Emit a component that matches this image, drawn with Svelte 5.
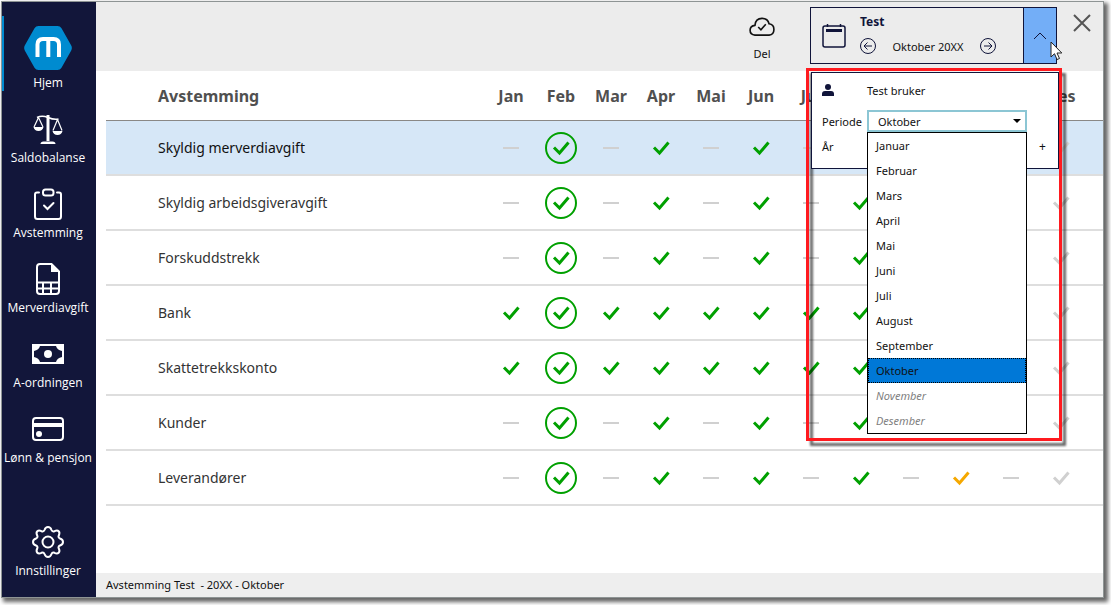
<script lang="ts">
  type Status = "none" | "done" | "final" | "pending" | "empty";

  interface Account {
    name: string;
    months: Status[];
  }

  const months = [
    "Januar", "Februar", "Mars", "April", "Mai", "Juni",
    "Juli", "August", "September", "Oktober", "November", "Desember",
  ];

  const menu = [
    { id: "home", label: "Hjem" },
    { id: "balance", label: "Saldobalanse" },
    { id: "reconcile", label: "Avstemming" },
    { id: "vat", label: "Merverdiavgift" },
    { id: "salary-report", label: "A-ordningen" },
    { id: "payroll", label: "Lønn & pensjon" },
  ];

  // One letter per month: - none, d done, f final, p pending, e empty
  const codes: Record<string, Status> = { "-": "none", d: "done", f: "final", p: "pending", e: "empty" };

  function account(name: string, row: string): Account {
    return { name, months: [...row].map(c => codes[c]) };
  }

  const accounts = [
    account("Skyldig merverdiavgift", "-f-d-d-d-p-e"),
    account("Skyldig arbeidsgiveravgift", "-f-d-d-d-p-e"),
    account("Forskuddstrekk", "-f-d-d-d-p-e"),
    account("Bank", "dfdddddddpee"),
    account("Skattetrekkskonto", "dfdddddddpee"),
    account("Kunder", "-f-d-d-d-p-e"),
    account("Leverandører", "-f-d-d-d-p-e"),
  ];

  const client = "Test";
  const year = "20XX";
  const lastOpenMonth = 9;

  let activeMenu = $state("home");
  let selectedRow = $state(0);
  let month = $state(9);
  let open = $state(true);

  function step(delta: number) {
    month = Math.min(lastOpenMonth, Math.max(0, month + delta));
  }
</script>

{#snippet menuIcon(id: string)}
  {#if id === "home"}
    <svg width="48" height="44" viewBox="0 0 48 44">
      <path d="M14.500 0h19q2.600 0 4 2.300l9.600 17q1.500 2.700 0 5.400l-9.600 17q-1.400 2.300-4 2.300h-19q-2.600 0-4-2.300l-9.600-17q-1.500-2.700 0-5.400l9.600-17q1.400-2.300 4-2.300z" fill="#008bd0" />
      <path d="M13.500 31V18.500q0-5.500 5.500-5.500h10.500q5.500 0 5.500 5.500V31M24.300 13v18" fill="none" stroke="#fff" stroke-width="4" />
    </svg>
  {:else if id === "balance"}
    <svg width="32" height="32" viewBox="0 0 32 32" fill="none" stroke="#fff">
      <path d="M16 2v26" stroke-width="3" />
      <path d="M5 4.500q5-2.500 11 0t10.500 1.500" stroke-width="1.500" />
      <path d="M6.500 4.500 2 14M6.500 4.500 11 14M25.500 6.500 21 17.500M25.500 6.500 30 17.500" stroke-width="1.200" />
      <path d="M1.500 14h10q-1 4-5 4t-5-4zM20.500 18h10q-1 4-5 4t-5-4z" fill="#fff" stroke="none" />
      <path d="M8.500 31q0-2.500 3-2.500h9q3 0 3 2.500z" fill="#fff" stroke="none" />
    </svg>
  {:else if id === "reconcile"}
    <svg width="32" height="32" viewBox="0 0 32 32" fill="none" stroke="#fff" stroke-width="2" stroke-linecap="round">
      <path d="M7 4.500H5Q3 4.500 3 6.500v22q0 2.500 2.500 2.500h21q2.500 0 2.500-2.500v-22q0-2-2-2h-2" />
      <rect x="11" y="1.500" width="10.500" height="6" rx="2.500" />
      <path d="M12 17.500l3.500 3.500 6-6" />
    </svg>
  {:else if id === "vat"}
    <svg width="32" height="32" viewBox="0 0 32 32" fill="none" stroke="#fff" stroke-width="2">
      <path d="M19.500 1H8Q5 1 5 4v24q0 3 3 3h16q3 0 3-3V8.500z" />
      <path d="M19 1v8h8z" fill="#fff" stroke="none" />
      <path d="M5 19.500h22M5 25.500h22M11 19.500V31M19 19.500V31" />
    </svg>
  {:else if id === "salary-report"}
    <svg width="32" height="32" viewBox="0 0 32 32">
      <rect x="1" y="7" width="30" height="18" fill="none" stroke="#fff" stroke-width="2" />
      <path d="M2 8h6q-1 4-6 5zM30 8h-6q1 4 6 5zM2 24h6q-1-4-6-5zM30 24h-6q1-4 6-5z" fill="#fff" />
      <circle cx="16" cy="16" r="4" fill="#fff" />
    </svg>
  {:else if id === "payroll"}
    <svg width="32" height="32" viewBox="0 0 32 32">
      <rect x="1" y="5" width="30" height="22" rx="3" fill="none" stroke="#fff" stroke-width="2" />
      <path d="M1 10h30v4H1z" fill="#fff" />
      <circle cx="7" cy="21" r="3" fill="#fff" />
    </svg>
  {:else}
    <svg width="32" height="32" viewBox="0 0 32 32" fill="none" stroke="#fff" stroke-width="2" stroke-linejoin="round">
      <path d="M12.500 4q1-3 3.500-3t3.500 3q.8 2 3 1.200 2.800-1.400 4.200.1t.1 4.200q-1 2 1.200 3 3 1 3 3.500t-3 3.500q-2.200 1-1.200 3 1.400 2.800-.1 4.200t-4.200.1q-2.200-.8-3 1.200-1 3-3.500 3t-3.500-3q-.8-2-3-1.200-2.800 1.400-4.200-.1t-.1-4.200q1-2-1.200-3-3-1-3-3.500t3-3.500q2.200-1 1.200-3-1.400-2.800.1-4.200t4.200-.1q2.200.8 3-1.200z" />
      <circle cx="16" cy="16" r="5.500" />
    </svg>
  {/if}
{/snippet}

{#snippet statusMark(status: Status)}
  <svg class="mark {status}" width="32" height="32" viewBox="0 0 32 32" aria-label={status}>
    {#if status === "none"}
      <path d="M8 16h16" />
    {:else}
      {#if status === "final"}
        <circle cx="16" cy="16" r="15" />
      {/if}
      <path class="tick" d="M9 15.500l5.500 5.500 9-10.500" />
    {/if}
  </svg>
{/snippet}

<div class="window">
  <nav class="sidebar">
    {#each menu as item (item.id)}
      <button class="menu-item" class:active={activeMenu === item.id} onclick={() => (activeMenu = item.id)}>
        {@render menuIcon(item.id)}
        <span>{item.label}</span>
      </button>
    {/each}
    <button class="menu-item settings">
      {@render menuIcon("settings")}
      <span>Innstillinger</span>
    </button>
  </nav>

  <div class="content">
    <header class="topbar">
      <button class="share">
        <svg width="26" height="20" viewBox="0 0 24 18" fill="none" stroke="#111" stroke-width="1.500">
          <path d="M5.500 16.500Q1 16 1 12t4.500-4.500Q6 1 12 1q5.500 0 6.500 5 4.500.5 4.500 5.200T18.500 16.500z" />
          <path d="M8.500 9l2.500 2.500 4.500-5" />
        </svg>
        <span>Del</span>
      </button>

      <div class="picker">
        <svg class="calendar" width="24" height="24" viewBox="0 0 24 24" fill="none" stroke="#10143a">
          <rect x="1" y="2" width="22" height="21" rx="2" stroke-width="1.500" />
          <path d="M4 6.500h16" stroke-width="3" />
          <path d="M5.500 0v3M18.500 0v3" stroke-width="1.500" />
        </svg>
        <div class="current">
          <strong>{client}</strong>
          <div class="stepper">
            <button aria-label="Forrige periode" onclick={() => step(-1)}>
              <svg width="18" height="18" viewBox="0 0 18 18"><circle cx="9" cy="9" r="7.500" /><path d="M13 9H5.500M8.500 5.500 5 9l3.500 3.500" /></svg>
            </button>
            <span>{months[month]} {year}</span>
            <button aria-label="Neste periode" onclick={() => step(1)}>
              <svg width="18" height="18" viewBox="0 0 18 18"><circle cx="9" cy="9" r="7.500" /><path d="M5 9h7.500M9.500 5.500 13 9l-3.500 3.500" /></svg>
            </button>
          </div>
        </div>
        <button class="toggle" aria-label="Velg periode" aria-expanded={open} onclick={() => (open = !open)}>
          <svg width="14" height="8" viewBox="0 0 14 8"><path d="M1 7l6-6 6 6" fill="none" stroke="#10143a" /></svg>
        </button>

        {#if open}
          <div class="highlight"></div>
          <div class="panel">
            <svg width="12" height="12" viewBox="0 0 12 12" fill="#10143a">
              <circle cx="6" cy="3" r="3" />
              <path d="M0 12V10q0-3 3-3h6q3 0 3 3v2z" />
            </svg>
            <span class="user">Test bruker</span>
            <label for="period">Periode</label>
            <div class="combo">
              <select id="period" bind:value={month}>
                {#each months as name, i (name)}
                  <option value={i} disabled={i > lastOpenMonth}>{name}</option>
                {/each}
              </select>
              <ul role="listbox" aria-label="Periode">
                {#each months as name, i (name)}
                  <li role="option" aria-selected={i === month}>
                    <button class:selected={i === month} disabled={i > lastOpenMonth} onclick={() => (month = i)}>{name}</button>
                  </li>
                {/each}
              </ul>
            </div>
            <span class="year-label">År</span>
            <button class="plus" aria-label="Neste år">+</button>
          </div>
        {/if}
        <svg class="pointer" width="13" height="20" viewBox="0 0 13 20">
          <path d="M1 1v15l3.500-3.300L7 18.500l2.500-1L7 12h4.800z" fill="#fff" stroke="#222" />
        </svg>
      </div>

      <button class="close" aria-label="Lukk">
        <svg width="18" height="18" viewBox="0 0 18 18"><path d="M1 1l16 16M17 1 1 17" stroke="#555" stroke-width="2" /></svg>
      </button>
    </header>

    <main>
      <table>
        <thead>
          <tr>
            <th class="name">Avstemming</th>
            {#each months as name (name)}
              <th>{name.slice(0, 3)}</th>
            {/each}
          </tr>
        </thead>
        <tbody>
          {#each accounts as row, i (row.name)}
            <tr class:selected={i === selectedRow} onclick={() => (selectedRow = i)}>
              <td class="name">{row.name}</td>
              {#each row.months as status}
                <td>{@render statusMark(status)}</td>
              {/each}
            </tr>
          {/each}
        </tbody>
      </table>
    </main>

    <footer>Avstemming {client}  - {year} - {months[month]}</footer>
  </div>
</div>

<style>
  :global(body) { display: flow-root; background: #fff; }
  .window, .window * { box-sizing: border-box; }
  .window {
    display: flex;
    min-height: calc(100vh - 8px);
    margin: 1px 7px 7px 1px;
    border: 1px solid #8e9494;
    box-shadow: 3px 3px 4px 1px rgba(0, 0, 0, 0.6);
    background: #fff;
    color: #111;
    font-family: "Noto Sans", "Open Sans", sans-serif;
    font-size: 11px;
  }
  button { padding: 0; border: 0; background: none; color: inherit; font: inherit; cursor: pointer; }
  svg { display: block; flex: none; }

  .sidebar { display: flex; flex-direction: column; flex: none; width: 94px; padding: 14px 0 18px; background: #12163a; }
  .menu-item {
    display: flex;
    flex-direction: column;
    align-items: center;
    justify-content: flex-end;
    gap: 5px;
    height: 75px;
    border: solid transparent;
    border-width: 0 4px 0 2px;
    color: #fff;
    font-family: "Open Sans", "Noto Sans", sans-serif;
    font-size: 12px;
    line-height: 16px;
    white-space: nowrap;
  }
  .menu-item.active { border-left-color: #008bd0; }
  .settings { margin-top: auto; }

  .content { display: flex; flex-direction: column; flex: 1; min-width: 0; }
  .topbar { display: flex; justify-content: flex-end; height: 69px; padding: 5px 12px 0 0; background: #ececec; }
  .share { display: flex; flex-direction: column; align-items: center; gap: 9px; width: 48px; margin-right: 24px; padding-top: 10px; align-self: flex-start; line-height: 16px; }
  .close { align-self: flex-start; margin: 7px 0 0 16px; }

  .picker { position: relative; display: flex; width: 247px; height: 57px; border: 1px solid #10143a; }
  .calendar { margin: 16px 14px 0 11px; }
  .current { flex: 1; padding-top: 5px; color: #10143a; }
  .current strong { display: block; font-size: 12px; line-height: 18px; }
  .stepper { display: flex; align-items: center; justify-content: space-between; width: 138px; height: 30px; margin-left: -1px; color: #111; }
  .stepper svg { fill: none; stroke: #10143a; }
  .toggle { display: grid; place-items: center; width: 33px; border-left: 1px solid #10143a; background: #73aef7; }

  .panel {
    position: absolute;
    z-index: 2;
    top: 64px;
    left: 0;
    display: grid;
    grid-template-columns: 45px 160px 1fr;
    grid-template-rows: 34px 28px 22px;
    align-items: center;
    width: 248px;
    height: 97px;
    padding-left: 10px;
    border: 1px solid #10143a;
    background: #fff;
  }
  .user { grid-column: 2 / 4; }
  .combo { position: relative; grid-column: 2 / 4; width: 160px; }
  select {
    display: block;
    width: 100%;
    height: 22px;
    padding: 1px 9px 0;
    border: 2px solid #8cc6d4;
    border-radius: 0;
    appearance: none;
    background: #fff;
    color: #111;
    font: inherit;
  }
  .combo::before {
    content: "";
    position: absolute;
    top: 9px;
    right: 6px;
    border: 4px solid transparent;
    border-top-color: #000;
    border-bottom: 0;
  }
  ul { position: absolute; top: 22px; left: 0; width: 100%; margin: 0; padding: 0; border: 1px solid #000; background: #fff; list-style: none; }
  li button { display: block; width: 100%; height: 25px; padding: 0 8px; text-align: left; }
  li button.selected { background: #0078d7; outline: 1px dotted #000; outline-offset: -1px; }
  li button:disabled { color: #808080; font-style: italic; }
  .plus { grid-column: 3; height: 22px; font-size: 12px; }

  .highlight {
    position: absolute;
    z-index: 1;
    top: 60px;
    left: -5px;
    width: 256px;
    height: 373px;
    border: 3px solid #ff1a1f;
    filter: drop-shadow(4px 5px 1px rgba(0, 0, 0, 0.6));
    pointer-events: none;
  }
  .pointer { position: absolute; z-index: 3; top: 33px; left: 239px; pointer-events: none; }

  main { flex: 1; padding-left: 10px; }
  table { width: 100%; border-collapse: separate; border-spacing: 0; table-layout: fixed; }
  th { width: 50px; height: 50px; padding: 0; border-bottom: 1px solid #8a8886; color: #505050; font-size: 16px; font-weight: 700; }
  td { height: 55px; padding: 0; border-bottom: 2px solid #dedede; color: #333; font-size: 14px; }
  th:last-child, td:last-child { width: 67px; padding-right: 17px; }
  .name { width: auto; padding-left: 52px; text-align: left; }
  tr.selected td { background: #d6e7f7; color: #111; }

  .mark { margin: 0 auto; fill: none; stroke: #00a000; stroke-width: 2; }
  .mark .tick { stroke-width: 3; }
  .mark.none { stroke: #d0d0d0; }
  .mark.pending { stroke: #f5a800; }
  .mark.empty { stroke: #d0d0d0; }

  footer { height: 24px; padding-left: 10px; background: #eee; line-height: 24px; white-space: pre; }
</style>
